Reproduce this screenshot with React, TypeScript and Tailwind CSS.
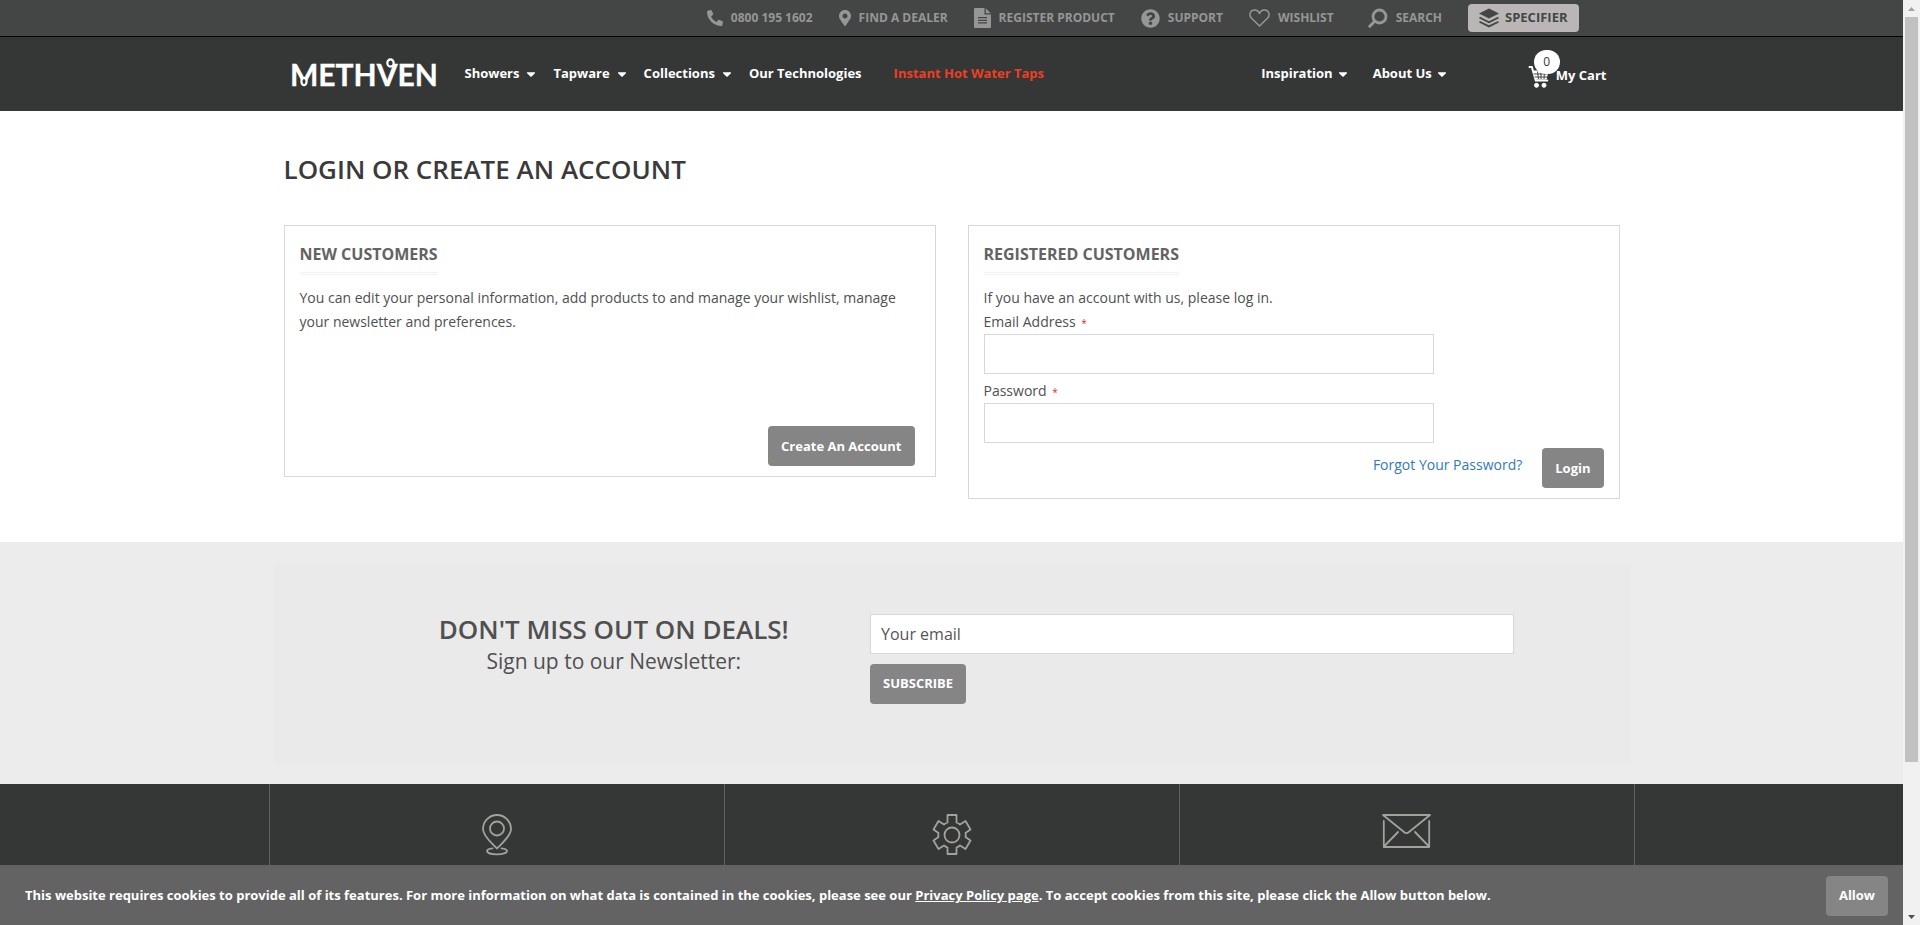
import type { ReactNode } from "react";
import { FaPhone, FaMapMarkerAlt, FaQuestionCircle, FaCaretDown } from "react-icons/fa";

function DocIcon() {
  return (
    <svg width="17" height="20" viewBox="0 0 17 20" fill="currentColor" aria-hidden="true">
      <path
        fillRule="evenodd"
        d="M1 0h9.500v6.500H17V19a1 1 0 0 1-1 1H1a1 1 0 0 1-1-1V1a1 1 0 0 1 1-1zm3 9v1.200h9V9zm0 2.700v1.200h9v-1.200zm0 2.600v1.200h9v-1.200z M11.800 0.300 16.700 5.200H11.800z"
      />
    </svg>
  );
}

function HeartIcon() {
  return (
    <svg width="21" height="18" viewBox="0 0 21 18" fill="none" stroke="currentColor" strokeWidth="1.500" aria-hidden="true">
      <path d="M10.500 17 2.300 9C-.2 6 .8 1 5.600 1c2.400 0 4.200 1.500 4.900 3.500C11.200 2.500 13 1 15.400 1c4.800 0 5.800 5 3.300 8z" strokeLinejoin="round" />
    </svg>
  );
}

function SearchIcon() {
  return (
    <svg width="20" height="20" viewBox="0 0 20 20" fill="none" stroke="currentColor" strokeWidth="2.800" aria-hidden="true">
      <circle cx="11.500" cy="8.500" r="6.500" />
      <path d="M6.500 13.500 1.800 18.300" strokeWidth="3" strokeLinecap="round" />
    </svg>
  );
}

function LayersIcon() {
  return (
    <svg width="20" height="20" viewBox="0 0 20 20" fill="currentColor" aria-hidden="true">
      <path d="M10 0.500 20 5.500 10 10.500 0 5.500z" />
      <path d="m0.500 9.500 9.500 4.700 9.500-4.700M0.500 13.700l9.500 4.700 9.500-4.700" fill="none" stroke="currentColor" strokeWidth="1.800" />
    </svg>
  );
}

function CartIcon() {
  return (
    <svg width="22" height="23" viewBox="0 0 22 23" fill="none" stroke="#fff" aria-hidden="true">
      <path d="M1.500 2h2.300l4 13.500h11.500" strokeWidth="2" strokeLinecap="round" />
      <path d="M5 6h15l-1.800 8H7.500z" fill="#fff" strokeWidth="1" />
      <path d="M5.500 9h14M6.500 12h13M9.500 6.500l1 7.500M13 6.500V14M16.500 6.500 16 14" stroke="#343736" strokeWidth="0.900" />
      <circle cx="8.500" cy="20.300" r="2" fill="#fff" />
      <circle cx="16" cy="20.300" r="2" fill="#fff" />
    </svg>
  );
}

function Logo() {
  return (
    <svg width="150" height="44" viewBox="0 0 150 44" fill="none" stroke="#fff" role="img" aria-label="Methven">
      <text x="1" y="34" fill="#fff" strokeWidth="0.300" fontSize="30" fontFamily="Lato, sans-serif">
        METHVEN
      </text>
      <ellipse cx="15" cy="29.500" rx="2.600" ry="3.600" strokeWidth="2.200" fill="#343736" />
      <ellipse cx="101.500" cy="11" rx="3.200" ry="3.600" strokeWidth="2.200" fill="#343736" />
    </svg>
  );
}

const topLinks: { label: string; icon: ReactNode }[] = [
  { label: "0800 195 1602", icon: <FaPhone className="h-4 w-4 -scale-x-100" /> },
  { label: "FIND A DEALER", icon: <FaMapMarkerAlt className="h-[18px] w-3" /> },
  { label: "REGISTER PRODUCT", icon: <DocIcon /> },
  { label: "SUPPORT", icon: <FaQuestionCircle className="h-[19px] w-[19px]" /> },
  { label: "WISHLIST", icon: <HeartIcon /> },
];

function TopLink({ label, icon }: { label: string; icon: ReactNode }) {
  return (
    <a href="#" className="flex items-center gap-2 whitespace-nowrap">
      {icon}
      {label}
    </a>
  );
}

function TopBar() {
  return (
    <div className="border-b border-black bg-[#434645]">
      <div className="mx-auto flex h-9 max-w-[1366px] items-center justify-end gap-[26px] pr-14 text-xs font-bold text-[#969695]">
        {topLinks.map((link) => (
          <TopLink key={link.label} {...link} />
        ))}
        <div className="ml-2">
          <TopLink label="SEARCH" icon={<SearchIcon />} />
        </div>
        <a href="#" className="flex h-7 items-center gap-1.5 rounded bg-[#b9b6b5] px-[11px] text-[13px] text-[#434645]">
          <LayersIcon />
          SPECIFIER
        </a>
      </div>
    </div>
  );
}

function NavItem({ label, caret }: { label: string; caret?: string }) {
  return (
    <a href="#" className="flex items-center whitespace-nowrap">
      {label}
      {caret && <FaCaretDown className={caret} />}
    </a>
  );
}

function MainNav() {
  return (
    <div className="bg-[#343736]">
      <div className="mx-auto flex h-[74px] max-w-[1366px] items-center pr-7 pl-5 text-[13px] font-bold text-white">
        <a href="#" className="mr-[26px] shrink-0">
          <Logo />
        </a>
        <nav className="flex items-center gap-4">
          <NavItem label="Showers" caret="ml-1.5 h-3.5 w-3" />
          <NavItem label="Tapware" caret="ml-1.5 h-3.5 w-3" />
          <NavItem label="Collections" caret="ml-1.5 h-3.5 w-3" />
          <NavItem label="Our Technologies" />
          <a href="#" className="ml-4 whitespace-nowrap text-[#f03e23]">
            Instant Hot Water Taps
          </a>
        </nav>
        <nav className="ml-auto flex items-center gap-6">
          <NavItem label="Inspiration" caret="ml-1 h-3.5 w-3" />
          <NavItem label="About Us" caret="ml-1 h-3.5 w-3" />
        </nav>
        <a href="#" className="relative ml-20 flex items-center gap-1.5 whitespace-nowrap pt-1">
          <CartIcon />
          My Cart
          <span className="absolute -top-[11px] left-1.5 flex h-6 w-[26px] items-center justify-center rounded-full bg-white text-xs font-medium text-[#343736]">
            0
          </span>
        </a>
      </div>
    </div>
  );
}

function CardTitle({ children }: { children: ReactNode }) {
  return (
    <h2 className="mb-[11px] w-fit border-b-3 border-double border-[#f2f2f2] pb-1.5 text-base leading-6 font-bold text-[#636363]">
      {children}
    </h2>
  );
}

function Field({ id, label, type }: { id: string; label: string; type: string }) {
  return (
    <div className="mb-[5px]">
      <label htmlFor={id} className="block h-6">
        {label} <span className="ml-0.5 text-[10px] text-[#e02b27]">*</span>
      </label>
      <input id={id} type={type} className="block h-10 w-full max-w-[450px] border border-[#d8d8d8] bg-white px-2.5 outline-none" />
    </div>
  );
}

const button = "h-10 rounded bg-[#858585] px-[13px] text-[13px] font-bold whitespace-nowrap text-white";
const card = "border border-[#d8d8d8] px-[15px] pt-4 pb-2.5";

function Accounts() {
  return (
    <main className="mx-auto w-full max-w-[1366px] px-[15px] pt-10 pb-[43px]">
      <h1 className="mb-[38px] text-[26px] leading-9 font-semibold text-[#3b3a3a]">LOGIN OR CREATE AN ACCOUNT</h1>
      <div className="grid grid-cols-2 items-start gap-8 text-sm leading-6">
        <section className={card}>
          <CardTitle>NEW CUSTOMERS</CardTitle>
          <p>
            You can edit your personal information, add products to and manage your wishlist, manage your newsletter and
            preferences.
          </p>
          <div className="mt-[92px] flex justify-end pr-[5px]">
            <button type="button" className={button}>
              Create An Account
            </button>
          </div>
        </section>
        <section className={card}>
          <CardTitle>REGISTERED CUSTOMERS</CardTitle>
          <form>
            <p>If you have an account with us, please log in.</p>
            <Field id="email" label="Email Address" type="email" />
            <Field id="password" label="Password" type="password" />
            <div className="flex items-center justify-end gap-5">
              <a href="#" className="pb-1.5 text-[#337ab7]">
                Forgot Your Password?
              </a>
              <button type="button" className={button}>
                Login
              </button>
            </div>
          </form>
        </section>
      </div>
    </main>
  );
}

function Newsletter() {
  return (
    <section className="bg-[#ececec] pt-[22px] pb-5">
      <div className="mx-auto grid max-w-[1356px] grid-cols-[47fr_64fr] gap-5 bg-[#eaeaea] pt-[50px] pr-[116px] pb-[60px] pl-[104px]">
        <div className="text-center text-[#505050]">
          <h2 className="text-[26px] leading-[30px] font-semibold">DON'T MISS OUT ON DEALS!</h2>
          <p className="text-[21px] leading-[34px]">Sign up to our Newsletter:</p>
        </div>
        <form className="flex flex-col items-start gap-2.5">
          <input
            type="email"
            aria-label="Your email"
            placeholder="Your email"
            className="h-10 w-full border border-[#d8d8d8] bg-white px-2.5 text-base outline-none placeholder:text-[#555]"
          />
          <button type="button" className={button}>
            SUBSCRIBE
          </button>
        </form>
      </div>
    </section>
  );
}

function PinOutline() {
  return (
    <svg width="30" height="42" viewBox="0 0 30 42" fill="none" stroke="#a2a29d" strokeWidth="1.800" aria-hidden="true">
      <path d="M15 34.500C11 30 1 22.500 1 15a14 14 0 0 1 28 0c0 7.500-10 15-14 19.500z" strokeLinejoin="round" />
      <circle cx="15" cy="14.500" r="7" />
      <path d="M10.500 34.300C7 34.600 5 35.600 5 37c0 2 4.500 3.300 10 3.300S25 39 25 37c0-1.400-2-2.400-5.500-2.700" strokeLinecap="round" />
    </svg>
  );
}

function GearOutline() {
  return (
    <svg width="40" height="42" viewBox="0 0 40 42" fill="none" stroke="#a2a29d" strokeWidth="1.800" strokeLinejoin="round" aria-hidden="true">
      <path d="M15.500 1h9v7.500q2 .7 3.500 2l5.500-3.500 5 8.500-5 3.500q.6 2 0 4l5 3.500-5 8.500-5.500-3.500q-1.500 1.300-3.500 2V40h-9v-6.500q-2-.7-3.500-2L6.500 35l-5-8.500 5-3.500q-.6-2 0-4l-5-3.500 5-8.500 5.500 3.500q1.500-1.300 3.500-2z" />
      <circle cx="20" cy="21" r="7.500" />
    </svg>
  );
}

function MailOutline() {
  return (
    <svg width="49" height="34" viewBox="0 0 49 34" fill="none" stroke="#a2a29d" strokeWidth="1.800" strokeLinecap="round" strokeLinejoin="round" aria-hidden="true">
      <path d="M1 1h47L27 18q-2.500 2.200-5 0z" />
      <path d="M1.800 7v26h45.400V7M2 32.500 16 18M47 32.500 33 18" />
    </svg>
  );
}

function Footer() {
  const cell = "flex justify-center border-r border-[#5f615f] pt-[30px]";
  return (
    <footer className="flex flex-1 bg-[#343736]">
      <div className="mx-auto grid w-full max-w-[1366px] grid-cols-3 border-l border-[#5f615f]">
        <a href="#" aria-label="Find a dealer" className={cell}>
          <PinOutline />
        </a>
        <a href="#" aria-label="Support" className={cell}>
          <GearOutline />
        </a>
        <a href="#" aria-label="Contact" className={cell}>
          <MailOutline />
        </a>
      </div>
    </footer>
  );
}

function CookieBar() {
  return (
    <div className="flex h-[60px] items-center justify-between bg-[#636363] pt-0.5 pr-[15px] pl-[25px] text-[13px] font-bold text-white">
      <p>
        This website requires cookies to provide all of its features. For more information on what data is contained in
        the cookies, please see our{" "}
        <a href="#" className="underline">
          Privacy Policy page
        </a>
        . To accept cookies from this site, please click the Allow button below.
      </p>
      <button type="button" className={button}>
        Allow
      </button>
    </div>
  );
}

function ScrollBar() {
  return (
    <div className="flex w-[17px] shrink-0 flex-col items-center justify-between bg-[#f1f1f1]" aria-hidden="true">
      <svg width="17" height="17" viewBox="0 0 17 17">
        <path d="M5 11h7L8.500 7z" fill="#a3a3a3" />
      </svg>
      <div className="w-[13px] grow-[745] bg-[#c1c1c1]" />
      <div className="grow-[146]" />
      <svg width="17" height="17" viewBox="0 0 17 17">
        <path d="M5 7h7l-3.500 4z" fill="#505050" />
      </svg>
    </div>
  );
}

export default function App() {
  return (
    <div className="flex min-h-screen bg-white font-['Open_Sans',sans-serif] text-[#505050]">
      <div className="flex min-w-0 flex-1 flex-col">
        <header>
          <TopBar />
          <MainNav />
        </header>
        <Accounts />
        <Newsletter />
        <Footer />
        <CookieBar />
      </div>
      <ScrollBar />
    </div>
  );
}
